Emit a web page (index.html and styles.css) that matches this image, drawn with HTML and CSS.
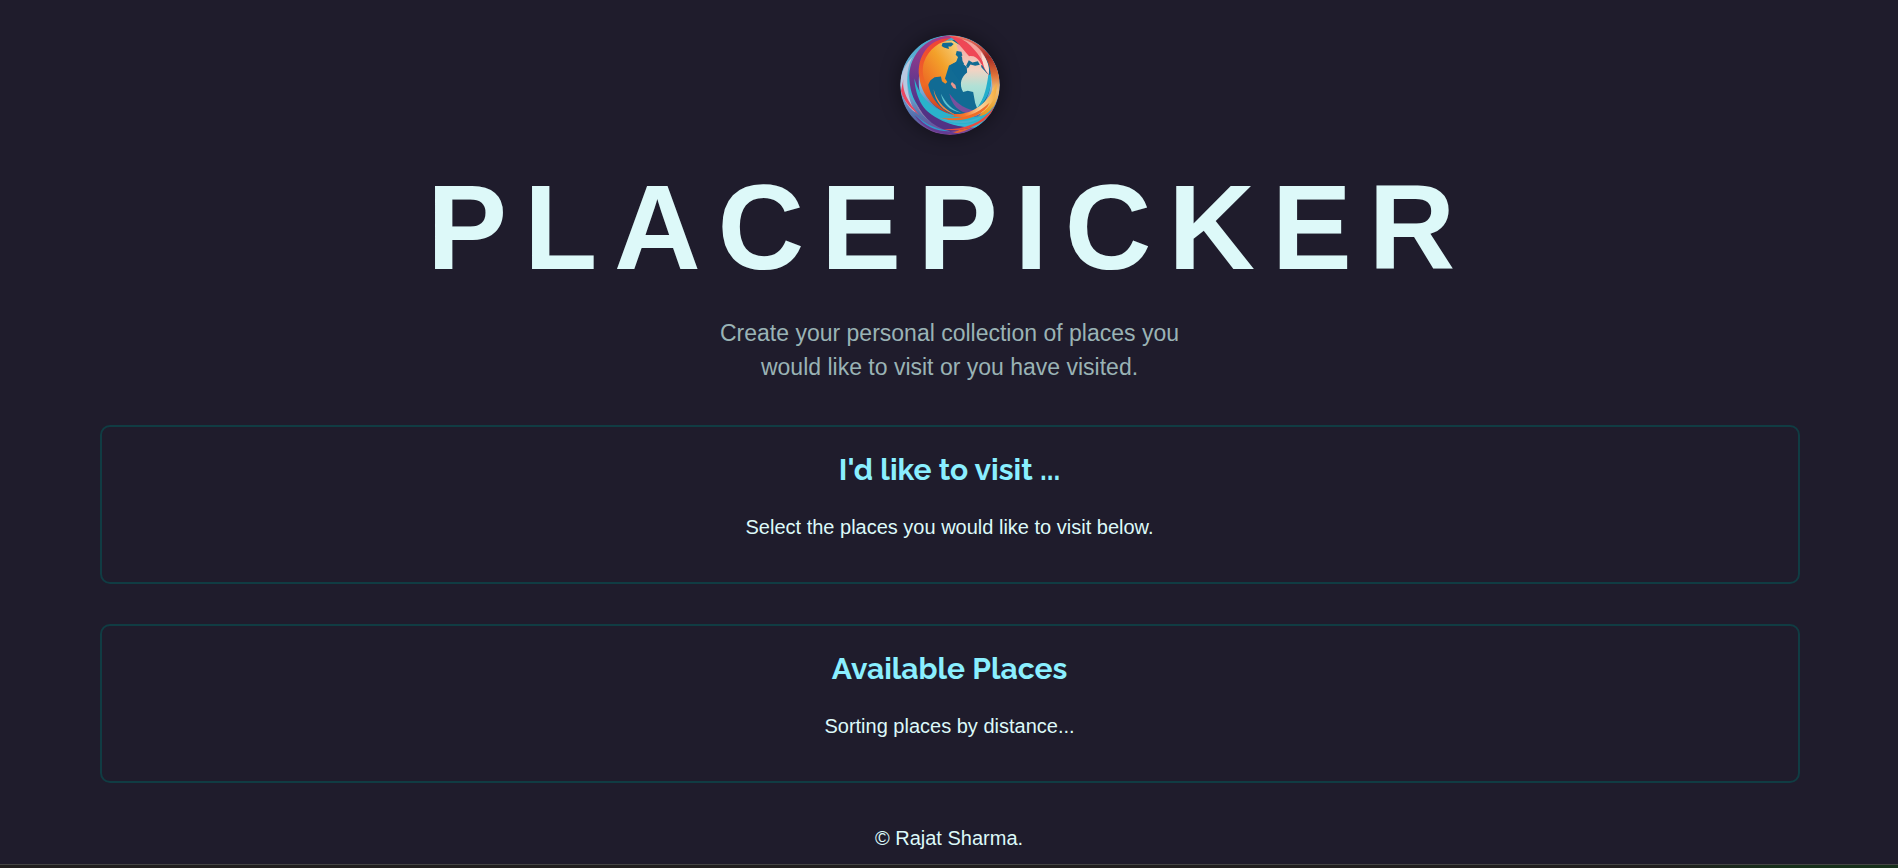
FILE: index.html
```html
<!DOCTYPE html>
<html lang="en">
<head>
<meta charset="utf-8">
<title>PlacePicker</title>
<link rel="stylesheet" href="styles.css">
</head>
<body>
<header class="header">
<svg class="logo" viewBox="5 6 298 298" aria-label="Stylized globe">
<defs>
<clipPath id="disc"><circle cx="154" cy="155" r="148"/></clipPath>
<linearGradient id="rim" x1="0" y1="0" x2="0" y2="1"><stop offset="0" stop-color="#3da6c9"/><stop offset=".5" stop-color="#80b8df"/><stop offset=".8" stop-color="#536eab"/><stop offset="1" stop-color="#873a91"/></linearGradient>
<linearGradient id="west" x1="1" y1=".2" x2="0" y2="1"><stop offset="0" stop-color="#f7cf7b"/><stop offset=".45" stop-color="#f3a12a"/><stop offset="1" stop-color="#ec6524"/></linearGradient>
<linearGradient id="east" x1="0" y1="0" x2="0" y2="1"><stop offset="0" stop-color="#f5a8a1"/><stop offset=".4" stop-color="#f2d3c3"/><stop offset=".65" stop-color="#b1e1d6"/><stop offset="1" stop-color="#91d9d5"/></linearGradient>
<linearGradient id="gold" x1="0" y1="0" x2="0" y2="1"><stop offset="0" stop-color="#f07a68"/><stop offset=".22" stop-color="#a82c25"/><stop offset=".4" stop-color="#dd7038"/><stop offset=".55" stop-color="#efbd79"/><stop offset=".75" stop-color="#e8a126"/><stop offset="1" stop-color="#e45a35"/></linearGradient>
<linearGradient id="flame" x1="0" y1="0" x2="1" y2="0"><stop offset="0" stop-color="#dc4c31"/><stop offset=".4" stop-color="#f7792c"/><stop offset=".7" stop-color="#f8d29e"/><stop offset="1" stop-color="#f5ad3b"/></linearGradient>
<linearGradient id="violet" x1="0" y1="0" x2="0" y2="1"><stop offset="0" stop-color="#a83d8a"/><stop offset=".5" stop-color="#62378d"/><stop offset="1" stop-color="#493084"/></linearGradient>
<linearGradient id="ember" x1="0" y1="0" x2="0" y2="1"><stop offset="0" stop-color="#ef4137"/><stop offset=".6" stop-color="#ee6a23"/><stop offset="1" stop-color="#cb3b25"/></linearGradient>
</defs>
<g clip-path="url(#disc)">
<path fill="url(#rim)" d="M0 0h310v310H0z"/>
<path fill="#b9c7e0" d="M44 70C20 105 18 180 51 237C27 222 6 183 6 151C7 119 22 90 44 70z"/>
<path fill="#e94762" d="M17 128C6 172 31 207 64 246C45 231 16 208 8 173z"/>
<path fill="#8b7caf" d="M39 179C52 222 100 260 156 284C98 275 55 246 39 179z"/>
<path fill="url(#gold)" d="M140 8C222 -1 303 65 303 155C302 220 245 295 145 303C208 286 273 239 280 159C280 85 229 28 140 8z"/>
<path fill="#35b7d4" d="M87 38C37 72 27 128 43 171C67 226 130 267 216 260C248 257 266 244 280 225L248 282C169 286 78 262 38 191C14 139 33 74 87 38z"/>
<path fill="url(#violet)" d="M154 8C75 10 29 75 33 137C37 217 89 270 176 291L150 284C95 260 59 205 61 140C64 80 100 28 160 14z"/>
<path fill="#116b94" d="M72 137C75 68 120 20 167 21C235 23 279 76 276 139C273 212 230 247 171 244C112 238 74 191 72 137z"/>
<path fill="url(#ember)" d="M155 16C92 14 54 72 62 129C69 191 112 228 159 244C112 219 83 174 88 121C94 68 117 34 155 16z"/>
<path fill="url(#west)" d="M76 88C91 48 123 23 160 22L187 39L181 63L172 87L151 97L145 116L139 136L146 146L140 151L130 144L127 130L108 132L96 141L87 157C72 135 70 110 76 88z"/>
<path fill="#0f6994" d="M129 39L132 30L158 28L165 33L157 40L149 40L151 48L136 43z"/>
<path fill="#0f6994" d="M186 78L193 96L203 103L203 118L185 145L160 112L158 94z"/>
<path fill="url(#east)" d="M173 34C214 34 249 60 266 92L270 130C268 172 252 201 235 225L229 209L223 176L207 172L193 176C180 153 188 130 205 118L204 101L192 91L190 72L178 54z"/>
<path fill="#136b92" d="M174 54L188 56L191 67L180 74L171 65zM178 76L187 79L196 91L185 101L178 89zM202 98L210 81L221 88L237 84L243 95L229 98L215 94L207 106zM246 82L255 88L255 94L246 91zM246 96L258 96L269 112L266 122L248 103z"/>
<path fill="#eb958b" d="M160 146L170 155L173 167L164 164L156 152z"/>
<path fill="#78509d" d="M152 180C169 203 190 224 227 231L213 239C181 239 158 212 152 180z"/>
<path fill="#ef4755" d="M151 9C187 10 229 40 243 68C251 88 264 103 271 127C242 91 241 66 211 69C193 51 181 28 151 9z"/>
<path fill="#f5a29c" d="M190 19C231 27 260 61 266 94C244 82 230 41 190 19z"/>
<path fill="#fad9cd" d="M245 57C270 82 273 111 269 123C250 103 252 79 245 57z"/>
<path fill="#24aecb" d="M276 122C281 172 259 205 233 227C258 193 264 157 268 126z"/>
<path fill="#f18744" d="M105 168C117 210 143 231 174 245C132 235 109 204 105 168z"/>
<path fill="#5ec1cd" d="M127 181C142 211 162 229 188 238C151 232 132 209 127 181z"/>
<path fill="#2ab2cb" d="M48 135C64 201 123 252 224 250C263 248 270 235 283 218C261 275 185 279 129 263C78 243 50 193 48 135z"/>
<path fill="url(#flame)" d="M143 236C201 256 267 218 292 148C300 193 262 243 212 251L136 249C178 249 174 247 143 236z"/>
<path fill="#ef6d28" d="M122 253C178 258 225 251 272 208C253 252 183 272 122 253z"/>
<path fill="#45b1cd" d="M115 249C163 270 219 265 250 247C225 277 157 275 115 249z"/>
<path fill="#523184" d="M50 190C83 247 146 278 219 282L155 294C96 276 63 243 50 190z"/>
<path fill="#e84b40" d="M133 287C196 288 249 269 285 221C265 272 194 299 133 287z"/>
<path fill="#653b93" d="M48 245C86 280 134 292 188 301C125 309 76 287 48 245z"/>
<path fill="#2f9acc" d="M55 247C84 277 118 286 155 293C112 294 78 278 55 247z"/>
</g>
</svg>
<h1 class="title">PlacePicker</h1>
<p class="intro">Create your personal collection of places you would like to visit or you have visited.</p>
</header>
<main class="main">
<section class="places"><h2 class="heading">I'd like to visit ...</h2><p class="message">Select the places you would like to visit below.</p></section>
<section class="places"><h2 class="heading">Available Places</h2><p class="message">Sorting places by distance...</p></section>
</main>
<footer class="footer">© Rajat Sharma.</footer>
<div class="bottom-edge"></div>
</body>
</html>
```

FILE: styles.css
```css
* { box-sizing: border-box; }
html { font-size: 20px; }
body { margin: 0; height: 868px; overflow: hidden; display: flex; flex-direction: column; background: #1f1c2c; color: #ddf9f9; font-family: "Liberation Sans", Arial, sans-serif; }
h1, h2, p { margin: 0; }
.header { display: flex; flex-direction: column; align-items: center; padding: 35px 0 0 1px; text-align: center; }
.logo { width: 100px; height: 100px; border-radius: 50%; box-shadow: 0 0 20px rgba(0, 0, 0, .45); }
.title { margin-top: 24px; font-size: 120px; line-height: 136px; letter-spacing: 16.8px; text-transform: uppercase; white-space: nowrap; }
.intro { width: 480px; margin-top: 21px; font-size: 23px; line-height: 34px; color: #9ab3b5; }
.main { display: flex; flex-direction: column; gap: 40px; padding: 0 98px 0 100px; margin-top: 41px; }
.places { height: 159px; border: 2px solid #103c43; border-radius: 10px; padding: 24px 1px 0 0; text-align: center; }
.heading { font: 700 30px/38px Raleway, Lato, sans-serif; color: #8aefff; }
.message { margin-top: 26px; font-size: 20px; line-height: 24px; }
.footer { margin-top: 43px; font-size: 20px; line-height: 24px; text-align: center; }
.bottom-edge { height: 4px; margin-top: auto; border-top: 1px solid #444444; background: linear-gradient(90deg, #211f1f 0 88%, #17301b 94%); }
```
